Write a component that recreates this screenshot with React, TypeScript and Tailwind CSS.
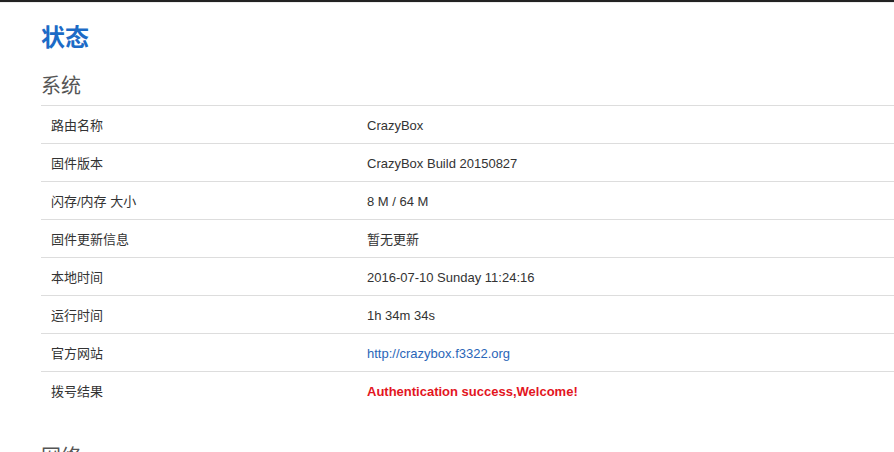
import React from "react";

const rows: { label: string; value: string; kind?: "link" | "alert" }[] = [
  { label: "路由名称", value: "CrazyBox" },
  { label: "固件版本", value: "CrazyBox Build 20150827" },
  { label: "闪存/内存 大小", value: "8 M / 64 M" },
  { label: "固件更新信息", value: "暂无更新" },
  { label: "本地时间", value: "2016-07-10 Sunday 11:24:16" },
  { label: "运行时间", value: "1h 34m 34s" },
  { label: "官方网站", value: "http://crazybox.f3322.org", kind: "link" },
  { label: "拨号结果", value: "Authentication success,Welcome!", kind: "alert" },
];

export default function App() {
  return (
    <div
      className="w-[894px] h-[452px] overflow-hidden bg-white text-[#333]"
      style={{ fontFamily: '"Liberation Sans", Arial, "Noto Sans CJK SC", sans-serif' }}
    >
      <div className="h-[2px] bg-[#222]" />
      <div className="h-[1px] bg-[#ececec]" />

      <div className="pl-[41px]">
        <h2 className="mt-[20px] text-[24px] leading-[30px] font-bold text-[#1c6bc6]">状态</h2>

        <h3 className="mt-[21px] mb-[7px] text-[20px] leading-[24px] text-[#555]">系统</h3>

        <div className="flex flex-col text-[13px]">
          {rows.map((row) => (
            <div key={row.label} className="flex h-[38px] items-center pt-[2px] border-t border-[#dddddd]">
              <div className="w-[326px] pl-[10px]">{row.label}</div>
              <div>
                {row.kind === "link" ? (
                  <a className="text-[#2a66b8]">{row.value}</a>
                ) : row.kind === "alert" ? (
                  <span className="font-bold text-[#e3151e]">{row.value}</span>
                ) : (
                  row.value
                )}
              </div>
            </div>
          ))}
        </div>

        <h3 className="mt-[36px] text-[20px] leading-[24px] text-[#555]">网络</h3>
      </div>
    </div>
  );
}
